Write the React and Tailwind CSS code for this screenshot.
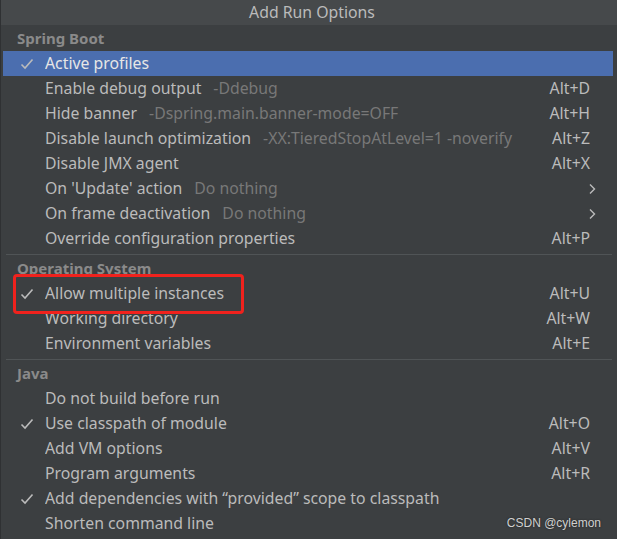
import React from "react";

const Check = () => (
  <svg width="14" height="12" viewBox="0 0 14 12" className="shrink-0">
    <path d="M1.5 6.5 L5 10 L12.5 1.5" fill="none" stroke="currentColor" strokeWidth="1.6" />
  </svg>
);

const Chevron = () => (
  <svg width="8" height="12" viewBox="0 0 8 12">
    <path d="M2 1.5 L6.5 6 L2 10.5" fill="none" stroke="#bbbbbb" strokeWidth="1.4" />
  </svg>
);

function Row({ label, hint, shortcut, checked, selected, sub }) {
  return (
    <div
      className={
        "h-[25px] flex items-center mr-[4px] " +
        (selected ? "bg-[#4b6eaf] text-[#e6e6e6]" : "text-[#bbbbbb]")
      }
    >
      <div className="w-[42px] pl-[17px] flex items-center text-[#bbbbbb]">
        {checked ? <Check /> : null}
      </div>
      <div className="flex-1 flex items-center whitespace-nowrap overflow-hidden">
        <span>{label}</span>
        {hint ? <span className="ml-[12px] text-[#787878]">{hint}</span> : null}
      </div>
      {shortcut ? <div className="pr-[23px] pl-4">{shortcut}</div> : null}
      {sub ? (
        <div className="pr-[17px] flex items-center">
          <Chevron />
        </div>
      ) : null}
    </div>
  );
}

const Header = ({ children }) => (
  <div className="h-[25px] flex items-center pl-[14px] font-bold text-[15px] text-[#8a8a8a]">
    {children}
  </div>
);

const Sep = () => (
  <div className="h-[5px] flex items-end pb-[1px]">
    <div className="ml-[3px] mr-[5px] flex-1 h-[1px] bg-[#505456]" />
  </div>
);

export default function App() {
  return (
    <div
      className="relative w-[617px] h-[539px] bg-[#3c3f41] overflow-hidden text-[15.8px] border-l border-[#2f3133]"
      style={{ fontFamily: '"Noto Sans", "Open Sans", sans-serif' }}
    >
      <div className="h-[25px] bg-[#46494b] flex items-center justify-center text-[#bbbbbb] pl-[6px]">
        Add Run Options
      </div>
      <div className="pt-[1px] pl-[2px]">
        <Header>Spring Boot</Header>
        <Row label="Active profiles" checked selected />
        <Row label="Enable debug output" hint="-Ddebug" shortcut="Alt+D" />
        <Row label="Hide banner" hint="-Dspring.main.banner-mode=OFF" shortcut="Alt+H" />
        <Row
          label="Disable launch optimization"
          hint="-XX:TieredStopAtLevel=1 -noverify"
          shortcut="Alt+Z"
        />
        <Row label="Disable JMX agent" shortcut="Alt+X" />
        <Row label="On 'Update' action" hint="Do nothing" sub />
        <Row label="On frame deactivation" hint="Do nothing" sub />
        <Row label="Override configuration properties" shortcut="Alt+P" />
        <Sep />
        <Header>Operating System</Header>
        <Row label="Allow multiple instances" checked shortcut="Alt+U" />
        <Row label="Working directory" shortcut="Alt+W" />
        <Row label="Environment variables" shortcut="Alt+E" />
        <Sep />
        <Header>Java</Header>
        <Row label="Do not build before run" />
        <Row label="Use classpath of module" checked shortcut="Alt+O" />
        <Row label="Add VM options" shortcut="Alt+V" />
        <Row label="Program arguments" shortcut="Alt+R" />
        <Row label="Add dependencies with “provided” scope to classpath" checked />
        <Row label="Shorten command line" />
      </div>
      <div className="absolute left-[12px] top-[274px] w-[231px] h-[40px] border-[3px] border-[#f0221d] rounded-[4px]" />
      <div
        className="absolute right-[16px] top-[514px] text-[12px] text-[#d0d0d0]"
        style={{ fontFamily: '"Liberation Sans", Arial, sans-serif', textShadow: "0 0 2px #222" }}
      >
        CSDN @cylemon
      </div>
    </div>
  );
}
